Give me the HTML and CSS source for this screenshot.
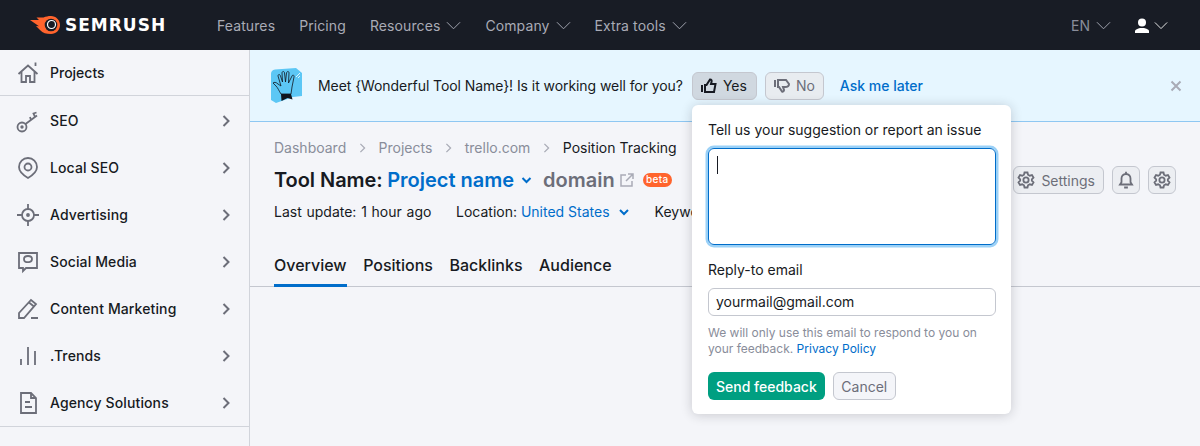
FILE: index.html
```html
<!DOCTYPE html>
<html lang="en">
<head>
    <meta charset="UTF-8">
    <meta name="viewport" content="width=device-width, initial-scale=1.0">
    <title>Semrush tool page</title>
    <link rel="stylesheet" href="styles.css">
</head>
<body>

<header class="topbar">
    <a class="logo">
        <svg width="31" height="20" viewBox="0 0 31 20">
            <path fill="#ff642d" d="M21 1c5 0 9 4 9 9s-4 9-9 9c-5 0-8-1-11-4L6 11l3 .2L0 5h9L6.500 2.500h7C16 1.500 18 1 21 1z"/>
            <circle cx="21" cy="10" r="6.300" fill="#181c25"/>
            <circle cx="21.500" cy="9.500" r="4" fill="none" stroke="#fff" stroke-width="1.200"/>
        </svg>
        <span class="logo-text">SEMRUSH</span>
    </a>
    <nav class="topnav">
        <a>Features</a>
        <a>Pricing</a>
        <a>Resources <svg class="caret" viewBox="0 0 16 9"><path d="M1 1l7 7 7-7"/></svg></a>
        <a>Company <svg class="caret" viewBox="0 0 16 9"><path d="M1 1l7 7 7-7"/></svg></a>
        <a>Extra tools <svg class="caret" viewBox="0 0 16 9"><path d="M1 1l7 7 7-7"/></svg></a>
    </nav>
    <div class="topright">
        <a class="lang">EN <svg class="caret" viewBox="0 0 16 9"><path d="M1 1l7 7 7-7"/></svg></a>
        <a class="user">
            <svg width="14" height="15" viewBox="0 0 14 15"><circle cx="7" cy="4.500" r="4" fill="#fff"/><path fill="#fff" d="M0 15v-2c0-1.500 3-2.500 5-3h4c2 .5 5 1.500 5 3v2z"/></svg>
            <svg class="caret white" viewBox="0 0 16 9"><path d="M1 1l7 7 7-7"/></svg>
        </a>
    </div>
</header>

<div class="layout">
    <aside class="sidebar">
        <div class="side-item side-first">
            <svg class="side-icon" viewBox="0 0 24 24"><path d="M2.500 13L12 4.500l9.500 8.500M5.500 11v10h4.500v-6h4v6h4.500V11M19.500 5V1.500"/></svg>
            <span>Projects</span>
        </div>
        <div class="side-group">
            <div class="side-item">
                <svg class="side-icon" viewBox="0 0 24 24"><circle cx="6" cy="18" r="4.500"/><circle cx="6" cy="18" r=".8"/><path d="M9.500 15L21 6.500M15 11l-1-3M19 8l-1.500-3.500 3-1"/></svg>
                <span>SEO</span>
                <svg class="chev" viewBox="0 0 8 12"><path d="M1.500 1l5 5-5 5"/></svg>
            </div>
            <div class="side-item">
                <svg class="side-icon" viewBox="0 0 24 24"><path d="M12 22c-5-3-9-6-9-11a9 9 0 0 1 18 0c0 5-4 8-9 11z"/><circle cx="12" cy="11" r="3.500"/></svg>
                <span>Local SEO</span>
                <svg class="chev" viewBox="0 0 8 12"><path d="M1.500 1l5 5-5 5"/></svg>
            </div>
            <div class="side-item">
                <svg class="side-icon" viewBox="0 0 24 24"><circle cx="12" cy="12" r="6"/><circle cx="12" cy="12" r="1"/><path d="M12 1v5M12 18v5M1 12h5M18 12h5"/></svg>
                <span>Advertising</span>
                <svg class="chev" viewBox="0 0 8 12"><path d="M1.500 1l5 5-5 5"/></svg>
            </div>
            <div class="side-item">
                <svg class="side-icon" viewBox="0 0 24 24"><path d="M3 3h18v15H10l-3 3v-3H3z"/><path d="M8 9c0-4 8-4 8 0s-5 3-6 3c-1 0-2-1-2-3z"/></svg>
                <span>Social Media</span>
                <svg class="chev" viewBox="0 0 8 12"><path d="M1.500 1l5 5-5 5"/></svg>
            </div>
            <div class="side-item">
                <svg class="side-icon" viewBox="0 0 24 24"><path d="M3 21v-5L15 3l5 4L8 21zM13 5.500l5 4M15 21h7"/></svg>
                <span>Content Marketing</span>
                <svg class="chev" viewBox="0 0 8 12"><path d="M1.500 1l5 5-5 5"/></svg>
            </div>
            <div class="side-item">
                <svg class="side-icon" viewBox="0 0 24 24"><path d="M5 21v-6M12 21V3M19 21V7"/></svg>
                <span>.Trends</span>
                <svg class="chev" viewBox="0 0 8 12"><path d="M1.500 1l5 5-5 5"/></svg>
            </div>
            <div class="side-item">
                <svg class="side-icon" viewBox="0 0 24 24"><path d="M5 2h10l5 5v15H5zM15 2v5h5M9 11h5M9 16h7"/></svg>
                <span>Agency Solutions</span>
                <svg class="chev" viewBox="0 0 8 12"><path d="M1.500 1l5 5-5 5"/></svg>
            </div>
        </div>
    </aside>

    <main class="content">
        <div class="notice">
            <svg class="hand" width="33" height="37" viewBox="0 0 33 37">
                <path fill="#5cc7f5" d="M1 7q0-4 4-4.500L26 1l6 5v23l-9 1-17 6-5-3z"/>
                <path fill="#5cc7f5" stroke="#10151e" stroke-width=".8" d="M11 27c-2-3-3-6-5-8l-3-3c1-1 3-1 5 1l3 2L8 9c0-2 2-2 2.500 0l2 6L12 6c0-2 2.500-2 2.500 0l1 9 1-9c.5-2 2.500-2 2.500 0l-.5 10L22 9c.5-1.500 2.500-1 2 1l-2 10-1 7z"/>
                <path fill="#10151e" d="M11 27h10l1.500 5.500-5-1.500-6 3z"/>
                <path stroke="#fff" stroke-width=".8" d="M26 10l4-4M28 11l2-2"/>
            </svg>
            <span class="notice-text">Meet {Wonderful Tool Name}! Is it working well for you?</span>
            <button class="btn btn-yes">
                <svg width="16" height="16" viewBox="0 0 16 16"><path fill="none" stroke="#171a22" stroke-width="2" d="M1 7v7M4 7h1.500L9 1.500c1.500 0 2 1 1.500 2.500L10 6h4.500l-1.500 8H4z"/></svg>
                Yes
            </button>
            <button class="btn btn-no">
                <svg width="16" height="16" viewBox="0 0 16 16"><path fill="none" stroke="#6c6e79" stroke-width="2" d="M1 2v7M4 2h8l3 4c0 2-2 3-4 3H9l1 3c0 1-1 2-2 1.500L5 9H4z"/></svg>
                No
            </button>
            <a class="later">Ask me later</a>
            <svg class="close" width="12" height="12" viewBox="0 0 12 12"><path d="M1.500 1.500l9 9M10.500 1.500l-9 9"/></svg>
        </div>

        <div class="page">
            <div class="crumbs">
                <a>Dashboard</a><svg class="crumb-sep" viewBox="0 0 8 12"><path d="M1.500 1l5 5-5 5"/></svg>
                <a>Projects</a><svg class="crumb-sep" viewBox="0 0 8 12"><path d="M1.500 1l5 5-5 5"/></svg>
                <a>trello.com</a><svg class="crumb-sep" viewBox="0 0 8 12"><path d="M1.500 1l5 5-5 5"/></svg>
                <span class="crumb-now">Position Tracking</span>
            </div>
            <div class="title-row">
                <h1>Tool Name:</h1>
                <a class="project">Project name</a>
                <svg class="small-chev" viewBox="0 0 10 7"><path d="M1 1l4 4 4-4"/></svg>
                <span class="domain">domain</span>
                <svg class="ext" width="14" height="14" viewBox="0 0 14 14"><path d="M6 2H1v11h11V8M8 1h5v5M13 1L6 8"/></svg>
                <span class="beta">beta</span>
                <div class="title-actions">
                    <button class="btn btn-ghost">
                        <svg class="gear" viewBox="0 0 24 24"><circle cx="12" cy="12" r="3.500"/><path d="M10 2h4l.7 3 2.300 1.300 3-.9 2 3.400-2.200 2.200v2l2.200 2.200-2 3.400-3-.9-2.300 1.300-.7 3h-4l-.7-3L7 17.700l-3 .9-2-3.400L4.200 13v-2L2 8.800l2-3.400 3 .9L9.300 5z"/></svg>
                        Settings
                    </button>
                    <button class="btn btn-square">
                        <svg class="gear" viewBox="0 0 24 24"><path d="M12 4c-4 0-6 3-6 6v5l-2 3h16l-2-3v-5c0-3-2-6-6-6zM9.500 22h5M12 1v3"/></svg>
                    </button>
                    <button class="btn btn-square">
                        <svg class="gear" viewBox="0 0 24 24"><circle cx="12" cy="12" r="3.500"/><path d="M10 2h4l.7 3 2.300 1.300 3-.9 2 3.400-2.200 2.200v2l2.200 2.200-2 3.400-3-.9-2.300 1.300-.7 3h-4l-.7-3L7 17.700l-3 .9-2-3.400L4.200 13v-2L2 8.800l2-3.400 3 .9L9.300 5z"/></svg>
                    </button>
                </div>
            </div>
            <div class="meta">
                <span class="meta-update">Last update: 1 hour ago</span>
                <span class="meta-location">Location: <a class="meta-link">United States</a><svg class="small-chev" viewBox="0 0 10 7"><path d="M1 1l4 4 4-4"/></svg></span>
                <span>Keywords</span>
            </div>
            <div class="tabs">
                <a class="tab tab-active">Overview</a>
                <a class="tab">Positions</a>
                <a class="tab">Backlinks</a>
                <a class="tab">Audience</a>
            </div>
        </div>

        <form class="popover">
            <label class="pop-label">Tell us your suggestion or report an issue</label>
            <div class="textarea"><span class="cursor"></span></div>
            <label class="pop-label pop-label-2">Reply-to email</label>
            <div class="email">yourmail@gmail.com</div>
            <div class="hint">
                <div>We will only use this email to respond to you on</div>
                <div>your feedback. <a>Privacy Policy</a></div>
            </div>
            <div class="pop-actions">
                <button type="button" class="send">Send feedback</button>
                <button type="button" class="cancel">Cancel</button>
            </div>
        </form>
    </main>
</div>

</body>
</html>
```

FILE: styles.css
```css
* {
    box-sizing: border-box;
}

html, body {
    height: 100%;
}

body {
    margin: 0;
    font-family: Inter, "Liberation Sans", sans-serif;
    font-size: 14px;
    color: #171a22;
    background: #f4f5f9;
    overflow: hidden;
}

button {
    font-family: inherit;
}

/* top bar */
.topbar {
    display: flex;
    align-items: center;
    height: 50px;
    padding: 0 32px 0 30px;
    background: #181c25;
    color: #a9abb6;
}

.logo {
    display: flex;
    align-items: center;
    width: 187px;
}

.logo svg {
    margin-right: 4px;
    flex: none;
}

.logo-text {
    color: #fff;
    font-family: "DejaVu Sans", sans-serif;
    font-size: 17px;
    font-weight: 700;
    letter-spacing: 1px;
}

.topnav {
    display: flex;
    gap: 24px;
    letter-spacing: .1px;
}

.topnav a, .topright a {
    display: flex;
    align-items: center;
    gap: 6px;
}

.caret {
    width: 15px;
    height: 9px;
    fill: none;
    stroke: #a9abb6;
    stroke-width: 1;
}

.caret.white {
    width: 14px;
    stroke: #fff;
}

.topright {
    display: flex;
    gap: 24px;
    margin-left: auto;
}

.lang {
    color: #898d9a;
}

.topright .user {
    gap: 5px;
}

/* sidebar */
.layout {
    display: flex;
    height: 396px;
}

.sidebar {
    width: 250px;
    flex: none;
    border-right: 1px solid #d1d4db;
    font-weight: 500;
    letter-spacing: .12px;
}

.side-item {
    display: flex;
    align-items: center;
    height: 47px;
    padding: 0 19px 0 16px;
}

.side-first {
    height: 46px;
    border-bottom: 1px solid #d1d4db;
    letter-spacing: 0;
}

.side-group {
    border-bottom: 1px solid #d1d4db;
    height: 331px;
    padding-top: 1px;
}

.side-icon {
    width: 24px;
    height: 24px;
    margin-right: 10px;
    fill: none;
    stroke: #6c6e79;
    stroke-width: 1.800;
    flex: none;
}

.chev {
    width: 8px;
    height: 12px;
    margin-left: auto;
    fill: none;
    stroke: #6c6e79;
    stroke-width: 2;
}

/* notice */
.content {
    position: relative;
    flex: 1;
    min-width: 0;
}

.notice {
    display: flex;
    align-items: center;
    height: 72px;
    padding: 0 18px 0 20px;
    background: #e6f6ff;
    border-bottom: 1px solid #8ec7f2;
}

.hand {
    flex: none;
    margin-right: 15px;
}

.notice-text {
    margin-right: 9px;
    letter-spacing: -.07px;
}

.btn {
    display: flex;
    align-items: center;
    gap: 6px;
    height: 28px;
    padding: 0 9px;
    border: 1px solid #c4c7cf;
    border-radius: 6px;
    background: #e8ecf0;
    color: #6c6e79;
    font-size: 14px;
}

.btn-yes {
    background: #d0d8e0;
    color: #171a22;
    margin-right: 8px;
    padding: 0 8px;
    width: 65px;
}

.btn-no {
    margin-right: 16px;
    padding: 0 8px;
}

.later {
    color: #006dca;
    font-weight: 500;
}

.close {
    margin-left: auto;
    fill: none;
    stroke: #a9abb6;
    stroke-width: 2;
}

/* page head */
.page {
    padding: 0 24px;
    border-bottom: 1px solid #c4c7cf;
}

.crumbs {
    display: flex;
    align-items: center;
    padding-top: 15px;
    height: 36px;
    color: #898d9a;
}

.crumb-sep {
    width: 7px;
    height: 10px;
    margin: 0 12.700px;
    fill: none;
    stroke: #a9abb6;
    stroke-width: 1.500;
}

.crumb-now {
    color: #171a22;
}

.title-row {
    display: flex;
    align-items: center;
    height: 28px;
    margin-top: 8px;
}

h1 {
    margin: 0 4.500px 0 0;
    font-size: 20px;
    font-weight: 600;
    letter-spacing: -.05px;
}

.project {
    color: #006dca;
    font-size: 20px;
    font-weight: 600;
}

.small-chev {
    width: 11px;
    height: 7px;
    margin: 0 11px 0 7px;
    fill: none;
    stroke: #006dca;
    stroke-width: 2;
}

.meta .small-chev {
    width: 12px;
    margin: 0 0 1px 8px;
}

.domain {
    color: #6c6e79;
    font-size: 20px;
    font-weight: 600;
}

.ext {
    margin: 0 9px 0 5px;
    fill: none;
    stroke: #a9abb6;
    stroke-width: 1.500;
}

.beta {
    width: 29px;
    height: 14px;
    line-height: 13px;
    text-align: center;
    border-radius: 7px;
    background: #ff642d;
    color: #fff;
    font-size: 10px;
    font-weight: 500;
    letter-spacing: .3px;
}

.title-actions {
    display: flex;
    gap: 8px;
    margin-left: auto;
}

.btn-ghost {
    background: #eceef2;
    padding: 0 8px 0 3px;
    gap: 6px;
    font-size: 14px;
}

.btn-square {
    width: 28px;
    padding: 0;
    justify-content: center;
    background: #eceef2;
}

.gear {
    width: 18px;
    height: 18px;
    fill: none;
    stroke: #6c6e79;
    stroke-width: 2.400;
}

.meta {
    display: flex;
    gap: 24px;
    margin-top: 8px;
    height: 20px;
    line-height: 20px;
    white-space: nowrap;
}

.meta-update {
    width: 158px;
    word-spacing: .8px;
}

.meta-location {
    margin-right: 1px;
}

.meta-link {
    color: #006dca;
}

.tabs {
    display: flex;
    gap: 16.500px;
    margin-top: 28px;
}

.tab {
    padding: 5px 0 0;
    font-size: 16px;
    font-weight: 500;
    height: 37px;
    margin-bottom: -1px;
    line-height: 20px;
}

.tab-active {
    border-bottom: 3px solid #006dca;
}

/* popover */
.popover {
    position: absolute;
    top: 55px;
    left: 442px;
    width: 319px;
    height: 309px;
    padding: 15px 15px 0 16px;
    background: #fff;
    border-radius: 6px;
    box-shadow: 0 1px 12px rgba(25, 27, 35, .2);
}

.pop-label {
    display: block;
    line-height: 20px;
}

.pop-label-2 {
    margin-top: 15px;
}

.textarea {
    height: 97px;
    margin-top: 8px;
    padding: 7px 8px;
    border: 1px solid #006dca;
    border-radius: 6px;
    box-shadow: 0 0 0 2.500px #9bd1f7;
}

.cursor {
    display: block;
    width: 1px;
    height: 18px;
    background: #171a22;
}

.email {
    height: 28px;
    margin-top: 8px;
    padding: 0 7px;
    line-height: 26px;
    border: 1px solid #c4c7cf;
    border-radius: 6px;
}

.hint {
    margin: 9px 0 0;
    font-size: 12px;
    line-height: 16px;
    color: #898d9a;
}

.hint a {
    color: #006dca;
}

.pop-actions {
    display: flex;
    gap: 8px;
    margin-top: 15px;
}

.send {
    height: 28px;
    padding: 0 8px;
    border: 0;
    border-radius: 6px;
    background: #009f81;
    color: #fff;
    font-size: 14px;
    font-weight: 500;
}

.cancel {
    height: 28px;
    width: 63px;
    padding: 0;
    border: 1px solid #c4c7cf;
    border-radius: 6px;
    background: #f4f5f9;
    color: #6c6e79;
    font-size: 14px;
}
```
